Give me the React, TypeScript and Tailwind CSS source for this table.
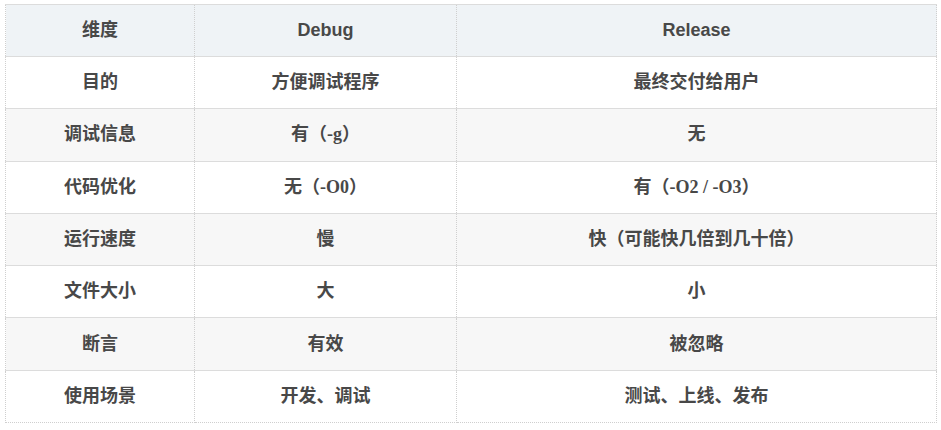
import React from "react";

const serif = "font-['Liberation_Serif','Noto_Sans_CJK_SC',serif]";

type Cell = React.ReactNode;
const rows: [Cell, Cell, Cell][] = [
  ["目的", "方便调试程序", "最终交付给用户"],
  [
    "调试信息",
    <>有<span className={serif}>（-g）</span></>,
    "无",
  ],
  [
    "代码优化",
    <>无<span className={serif}>（-O0）</span></>,
    <>有<span className={serif}>（-O2 / -O3）</span></>,
  ],
  ["运行速度", "慢", "快（可能快几倍到几十倍）"],
  ["文件大小", "大", "小"],
  ["断言", "有效", "被忽略"],
  ["使用场景", "开发、调试", "测试、上线、发布"],
];

export default function App() {
  return (
    <div className="w-[941px] h-[430px] bg-white pt-[4px] pl-[5px]">
      <table className="w-[931px] border-collapse table-fixed text-[18px] font-bold text-[#484848] font-['Liberation_Sans','Noto_Sans_CJK_SC',sans-serif]">
        <colgroup>
          <col className="w-[189px]" />
          <col className="w-[262px]" />
          <col className="w-[480px]" />
        </colgroup>
        <thead>
          <tr className="h-[52px] bg-[#eff3f6]">
            {["维度", "Debug", "Release"].map((t, i) => (
              <th
                key={i}
                className="border-t border-t-[#dcdcdc] border-b border-b-[#dcdcdc] border-l border-l-[#cfcfcf] border-dotted border-r border-r-[#cfcfcf] font-bold text-center align-middle p-0 [border-top-style:solid] [border-bottom-style:solid]"
              >
                {t}
              </th>
            ))}
          </tr>
        </thead>
        <tbody>
          {rows.map((r, ri) => (
            <tr
              key={ri}
              className={`h-[52.3px] ${ri % 2 === 1 ? "bg-[#f7f7f7]" : "bg-white"}`}
            >
              {r.map((c, ci) => (
                <td
                  key={ci}
                  className={`border border-dotted border-[#cfcfcf] text-center align-middle p-0 ${
                    ri === rows.length - 1 ? "[border-top-style:solid] [border-top-color:#dcdcdc]" : "[border-top-style:solid] [border-top-color:#dcdcdc] [border-bottom-style:solid] [border-bottom-color:#dcdcdc]"
                  }`}
                >
                  {c}
                </td>
              ))}
            </tr>
          ))}
        </tbody>
      </table>
    </div>
  );
}
